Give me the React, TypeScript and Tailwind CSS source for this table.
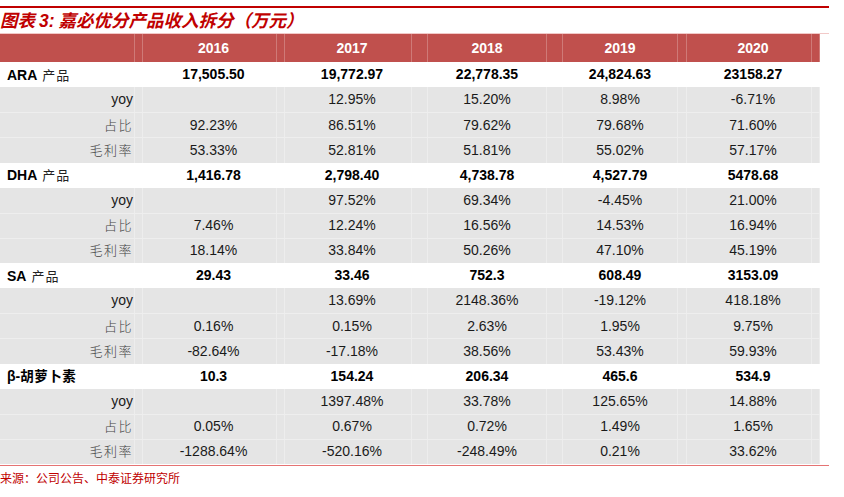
import React from "react";

const colW = ["w-[143px]", "w-[142px]", "w-[143px]", "w-[135px]", "w-[124px]", "w-[133px]"];
const spW = ["w-[8px]", "w-[8px]", "w-[16px]", "w-[16px]", "w-[9px]", "w-[8px]"];
const padL = ["", "pl-[8px]", "pl-[8px]", "", "", "pl-[8px]"];

type Row = { label: string; kind: "main" | "sub"; values: string[] };

const data: Row[] = [
  { label: "ARA|产品", kind: "main", values: ["17,505.50", "19,772.97", "22,778.35", "24,824.63", "23158.27"] },
  { label: "yoy", kind: "sub", values: ["", "12.95%", "15.20%", "8.98%", "-6.71%"] },
  { label: "占比", kind: "sub", values: ["92.23%", "86.51%", "79.62%", "79.68%", "71.60%"] },
  { label: "毛利率", kind: "sub", values: ["53.33%", "52.81%", "51.81%", "55.02%", "57.17%"] },
  { label: "DHA|产品", kind: "main", values: ["1,416.78", "2,798.40", "4,738.78", "4,527.79", "5478.68"] },
  { label: "yoy", kind: "sub", values: ["", "97.52%", "69.34%", "-4.45%", "21.00%"] },
  { label: "占比", kind: "sub", values: ["7.46%", "12.24%", "16.56%", "14.53%", "16.94%"] },
  { label: "毛利率", kind: "sub", values: ["18.14%", "33.84%", "50.26%", "47.10%", "45.19%"] },
  { label: "SA|产品", kind: "main", values: ["29.43", "33.46", "752.3", "608.49", "3153.09"] },
  { label: "yoy", kind: "sub", values: ["", "13.69%", "2148.36%", "-19.12%", "418.18%"] },
  { label: "占比", kind: "sub", values: ["0.16%", "0.15%", "2.63%", "1.95%", "9.75%"] },
  { label: "毛利率", kind: "sub", values: ["-82.64%", "-17.18%", "38.56%", "53.43%", "59.93%"] },
  { label: "β-|胡萝卜素", kind: "main", values: ["10.3", "154.24", "206.34", "465.6", "534.9"] },
  { label: "yoy", kind: "sub", values: ["", "1397.48%", "33.78%", "125.65%", "14.88%"] },
  { label: "占比", kind: "sub", values: ["0.05%", "0.67%", "0.72%", "1.49%", "1.65%"] },
  { label: "毛利率", kind: "sub", values: ["-1288.64%", "-520.16%", "-248.49%", "0.21%", "33.62%"] },
];

const latin = "font-['Liberation_Sans','Arial',sans-serif]";
const cjk = "font-['Noto_Sans_CJK_SC',sans-serif]";

function Cell({
  i,
  line,
  align = "center",
  children,
}: {
  i: number;
  line: string;
  align?: "center" | "left" | "right";
  children?: React.ReactNode;
}) {
  const just =
    align === "center" ? `justify-center ${padL[i]}` : align === "left" ? "justify-start pl-[7px]" : "justify-end pr-[1px]";
  return (
    <div className={`flex h-full shrink-0 ${colW[i]}`}>
      <div className={`flex flex-1 items-center whitespace-nowrap border-r ${line} ${just}`}>{children}</div>
      <div className={`h-full shrink-0 border-r ${line} ${spW[i]}`} />
    </div>
  );
}

function Label({ row }: { row: Row }) {
  if (row.kind === "main") {
    const [a, b] = row.label.split("|");
    const isBeta = a.startsWith("β");
    return (
      <span className="flex items-center leading-none">
        <span className={`${latin} text-[14px] font-bold leading-none text-black`}>{a}</span>
        {isBeta ? (
          <span className={`${cjk} -mt-[1px] text-[13.5px] font-bold leading-none tracking-[0.5px] text-black`}>{b}</span>
        ) : (
          <span className={`${cjk} -mt-[1px] ml-[5px] text-[13px] leading-none tracking-[1px] text-[#222]`}>{b}</span>
        )}
      </span>
    );
  }
  if (row.label === "yoy") {
    return <span className={`${latin} text-[14px] text-[#1a1a1a]`}>yoy</span>;
  }
  return (
    <span className={`${cjk} -mt-[2px] text-[13px] font-light leading-none tracking-[1.5px] text-[#444]`}>
      {row.label}
    </span>
  );
}

export default function App() {
  return (
    <div className={`relative h-[497px] w-[844px] overflow-hidden bg-white ${latin}`}>
      <div className="h-[6px]" />
      <div className="h-[2px] w-[829px] bg-[#c00000]" />
      <div className="flex h-[25px] items-center">
        <span className={`${cjk} text-[17.5px] font-bold italic leading-none text-[#c00000]`}>
          图表 <span className={latin}>3:</span> 嘉必优分产品收入拆分（万元）
        </span>
      </div>
      <div className="h-px w-[829px] bg-[#f2c9c8]" />
      <div className="flex h-[28px] w-[820px] bg-[#c0504d]">
        {["", "2016", "2017", "2018", "2019", "2020"].map((y, i) => (
          <Cell key={i} i={i} line="border-[#cf7a77]">
            <span className="text-[14px] font-bold text-white">{y}</span>
          </Cell>
        ))}
      </div>
      <div className="flex w-[820px] flex-col">
        {data.map((row, r) => {
          const main = row.kind === "main";
          const prevSub = r > 0 && data[r - 1].kind === "sub" && !main;
          return (
            <div
              key={r}
              className={`flex h-[25.125px] ${main ? "bg-white" : "bg-[#e5e5e5]"} ${
                prevSub ? "border-t border-[#eeeeee]" : ""
              }`}
            >
              <Cell i={0} line={main ? "border-transparent" : "border-[#ededed]"} align={main ? "left" : "right"}>
                <Label row={row} />
              </Cell>
              {row.values.map((v, k) => (
                <Cell key={k} i={k + 1} line={main ? "border-transparent" : "border-[#ededed]"}>
                  <span className={main ? "text-[14px] font-bold text-black" : "text-[14px] text-[#1a1a1a]"}>{v}</span>
                </Cell>
              ))}
            </div>
          );
        })}
      </div>
      <div className="mt-[1px] h-px w-[829px] bg-[#e57373]" />
      <div className={`${cjk} pt-[6px] text-[12px] leading-none text-[#c00000]`}>来源：公司公告、中泰证券研究所</div>
    </div>
  );
}
